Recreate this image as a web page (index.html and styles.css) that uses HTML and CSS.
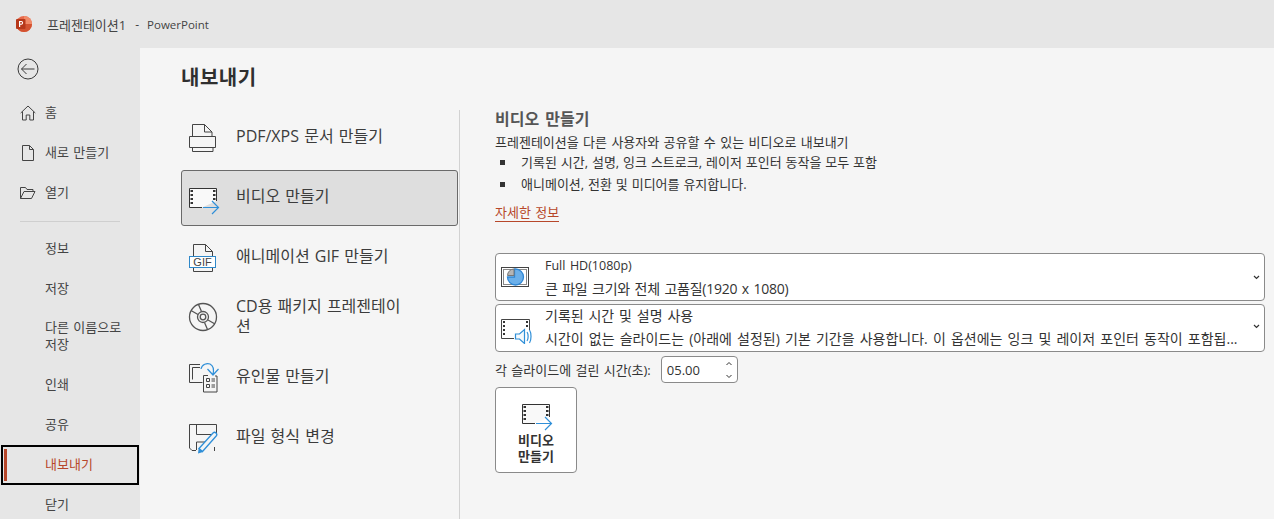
FILE: index.html
```html
<!DOCTYPE html>
<html lang="ko">
<head>
<meta charset="utf-8">
<title>내보내기</title>
<link rel="stylesheet" href="styles.css">
</head>
<body>
<div class="app">
  <header class="titlebar">
    <svg class="logo" width="16" height="16" viewBox="0 0 16 16"><circle cx="8" cy="8" r="8" fill="#e8694a"/><path d="M8 0a8 8 0 0 1 8 8H8z" fill="#f08a68"/><path d="M0 8a8 8 0 0 0 16 0z" fill="#d35230"/><rect x="0" y="3" width="9.500" height="10" rx="1" fill="#b7381a"/><path d="M3 5h2.300a1.800 1.800 0 0 1 0 3.700H4.200V11H3zM4.200 6v1.700h1a.85.85 0 0 0 0-1.700z" fill="#fff"/></svg>
    <span class="doc-name">프레젠테이션1</span>
    <span class="sep">-</span>
    <span class="app-name">PowerPoint</span>
  </header>
  <div class="main">
    <nav class="sidebar">
      <div class="back">
        <svg width="22" height="22" viewBox="0 0 22 22" fill="none" stroke="#3a3a3a"><circle cx="11" cy="11" r="10"/><path d="M4.500 11h13M9.500 6l-5 5 5 5"/></svg>
      </div>
      <a class="nav-item with-icon"><svg width="16" height="16" viewBox="0 0 16 16" fill="none" stroke="#444"><path d="M.7 8 8 1l7.300 7M2.500 6.500v8.500h3.700v-5h3.600v5h3.700V6.500"/></svg><span>홈</span></a>
      <a class="nav-item with-icon"><svg width="16" height="16" viewBox="0 0 16 16" fill="none" stroke="#444"><path d="M2.500.5h7l4 4v11h-11zM9.500.5v4h4"/></svg><span>새로 만들기</span></a>
      <a class="nav-item with-icon"><svg width="16" height="16" viewBox="0 0 16 16" fill="none" stroke="#444"><path d="M.5 13.500v-11h5l1.500 2h6v2M.5 13.500h11l3.500-7H4z"/></svg><span>열기</span></a>
      <div class="nav-divider"></div>
      <a class="nav-item">정보</a>
      <a class="nav-item">저장</a>
      <a class="nav-item tall">다른 이름으로 저장</a>
      <a class="nav-item">인쇄</a>
      <a class="nav-item">공유</a>
      <a class="nav-item active">내보내기</a>
      <a class="nav-item">닫기</a>
    </nav>
    <main class="content">
      <h1 class="page-title">내보내기</h1>
      <div class="columns">
        <ul class="export-list">
          <li class="export-item">
            <svg class="big-icon" width="32" height="32" viewBox="0 0 32 32" fill="none" stroke="#444"><path d="M5.500 14V2.500h12l7.500 7.500v4M17.500 2.500v7.500H25M2.500 14.500h26v11h-26zM5.500 25.500v4h20.500v-4"/></svg>
            <span>PDF/XPS 문서 만들기</span>
          </li>
          <li class="export-item selected">
            <svg class="big-icon film" width="32" height="32" viewBox="0 0 32 32" fill="none"><use href="#film"/></svg>
            <span>비디오 만들기</span>
          </li>
          <li class="export-item">
            <svg class="big-icon" width="32" height="32" viewBox="0 0 32 32" fill="none" stroke="#444"><path d="M6.500 14V2.500h12l7 7V14M18.500 2.500v7h7M6.500 25.500v4h19v-4"/><rect x="2.500" y="14.500" width="26" height="11" stroke="#2f88c9" fill="#fff"/><text x="15.500" y="24" class="gif">GIF</text></svg>
            <span>애니메이션 GIF 만들기</span>
          </li>
          <li class="export-item">
            <svg class="big-icon" width="32" height="32" viewBox="0 0 32 32" fill="none" stroke="#555" stroke-width="1.300"><circle cx="16" cy="15" r="13.500"/><circle cx="16" cy="15" r="5.500"/><circle cx="16" cy="15" r="2.800"/><path d="M4 8.500l7 4M21 18l7 4M11.500 2.500l3 7M17.500 20.500l3 7"/></svg>
            <span class="wrap">CD용 패키지 프레젠테이션</span>
          </li>
          <li class="export-item">
            <svg class="big-icon" width="32" height="32" viewBox="0 0 32 32" fill="none" stroke="#444"><path d="M13 2.500H2.500v18H15.500M5.500 17.500v-12H13M16.500 13.500v16.500h13.500v-16h-2M16.500 13.500H21M19.500 16.500h3v3h-3zM19.500 22.500h3v3h-3zM24.500 17h3.500M24.500 19h3.500M24.500 23h3.500M24.500 25h3.500"/><path d="M14 7c1-5 6-6 9-5 3 1.500 4 6 3 10.500M20.500 7l5.500 6 5.500-6" stroke="#2f8fd8" stroke-width="1.200"/></svg>
            <span>유인물 만들기</span>
          </li>
          <li class="export-item">
            <svg class="big-icon" width="32" height="32" viewBox="0 0 32 32" fill="none" stroke="#444"><path d="M9 28.500H5l-2.500-2.500V2.500h27v11M9.500 2.500v10h17M9.500 28v-8h9"/><path d="M27.500 29V25" /><path d="M12 26.500 26 11c2-2 5 .8 3.200 3L15.500 29.500z" stroke="#2f8fd8" stroke-width="1.300" fill="#f5f5f5"/><path d="M11 31.500l.7-5.500 4.300 4z" fill="#2f8fd8" stroke="none"/></svg>
            <span>파일 형식 변경</span>
          </li>
        </ul>
        <section class="detail">
          <h2 class="detail-title">비디오 만들기</h2>
          <p class="detail-sub">프레젠테이션을 다른 사용자와 공유할 수 있는 비디오로 내보내기</p>
          <ul class="bullets">
            <li>기록된 시간, 설명, 잉크 스트로크, 레이저 포인터 동작을 모두 포함</li>
            <li>애니메이션, 전환 및 미디어를 유지합니다.</li>
          </ul>
          <a class="more">자세한 정보</a>
          <div class="select">
            <svg width="32" height="32" viewBox="0 0 32 32" fill="none" stroke="#444"><rect x="1.500" y="6.500" width="27" height="19"/><rect x="3.500" y="8.500" width="23" height="15" stroke="#888"/><path d="M15.500 8a8 8 0 1 1-8 8h7v-8z" fill="#6cb0ea" stroke="#2e86d4" stroke-width="1.300"/><path d="M14 8v6.500H7.500A6.500 6.500 0 0 1 14 8z" fill="#b5b5b5" stroke="#777"/></svg>
            <div class="select-text">
              <div class="select-line latin">Full HD(1080p)</div>
              <div class="select-line tight">큰 파일 크기와 전체 고품질(1920 x 1080)</div>
            </div>
            <svg class="chev" width="7" height="5" viewBox="0 0 7 5" fill="none" stroke="#333" stroke-width="1.200"><path d="M1 1 3.500 3.500 6 1"/></svg>
          </div>
          <div class="select">
            <svg width="32" height="32" viewBox="0 0 32 32" fill="none"><path d="M14 26.500H1.500v-19h28V18" stroke="#444"/><path d="M3 10h2M3 14h2M3 18h2M3 22h2M26 10h2M26 14h2" stroke="#333" stroke-width="2"/><path d="M15.500 22h4l5-4.500v14l-5-4.500h-4z" fill="#f5fafd" stroke="#2f8fd8" stroke-width="1.200"/><path d="M27 20c1.500 2 1.500 7 0 9M29.500 18c2 3 2 10 0 13" stroke="#2f8fd8" stroke-width="1.200"/></svg>
            <div class="select-text raised">
              <div class="select-line">기록된 시간 및 설명 사용</div>
              <div class="select-line wide">시간이 없는 슬라이드는 (아래에 설정된) 기본 기간을 사용합니다. 이 옵션에는 잉크 및 레이저 포인터 동작이 포함됩...</div>
            </div>
            <svg class="chev raised" width="7" height="5" viewBox="0 0 7 5" fill="none" stroke="#333" stroke-width="1.200"><path d="M1 1 3.500 3.500 6 1"/></svg>
          </div>
          <div class="timing">
            <label>각 슬라이드에 걸린 시간(초):</label>
            <div class="spin">
              <span class="spin-value">05.00</span>
              <svg width="8" height="20" viewBox="0 0 8 20" fill="none" stroke="#333"><path d="M1.500 5l2.500-2.500L6.500 5M1.500 15l2.500 2.500L6.500 15"/></svg>
            </div>
          </div>
          <button class="make-btn">
            <svg class="film" width="32" height="32" viewBox="0 0 32 32" fill="none"><use href="#film"/></svg>
            <span>비디오<br>만들기</span>
          </button>
        </section>
      </div>
    </main>
  </div>
</div>
<svg class="defs" width="0" height="0"><defs><g id="film"><path d="M15 25.500H2.500v-19h27V19" stroke="#333" fill="#f9f9f9"/><path d="M3.500 9h2.500M3.500 13h2.500M3.500 17h2.500M3.500 21h2.500M26 9h2.500M26 13h2.500M26 17h2.500" stroke="#333" stroke-width="2"/><path d="M16 25.500h15.500M25 19l6.500 6.500L25 32" stroke="#2f8fd8" stroke-width="1.200"/></g></defs></svg>
</body>
</html>
```

FILE: styles.css
```css
* { box-sizing: border-box; }
html, body { margin: 0; height: 100%; overflow: hidden; }
body {
  font-family: "Open Sans", "Noto Sans CJK KR", sans-serif;
  font-size: 13px;
  word-spacing: 1px;
  color: #333;
  background: #e6e6e6;
}
a { display: block; }
ul { list-style: none; margin: 0; padding: 0; }
.defs { position: absolute; }
.film { overflow: visible; }

.app { display: flex; flex-direction: column; height: 519px; overflow: hidden; }
.titlebar {
  height: 48px;
  flex: none;
  display: flex;
  align-items: center;
  padding: 0 0 0 16px;
  color: #444;
}
.doc-name { margin-left: 15px; }
.sep { margin: 0 8px 0 9px; font-size: 12px; }
.app-name { font-size: 11.5px; }

.main { flex: 1; display: flex; min-height: 0; }
.sidebar { width: 140px; flex: none; padding-left: 1px; }
.back { height: 42px; padding: 10px 0 0 16px; }
.nav-item {
  height: 40px;
  display: flex;
  align-items: center;
  padding-left: 44px;
  padding-bottom: 2px;
  color: #444;
  line-height: 17px;
  width: 138px;
  word-break: keep-all;
}
.with-icon { padding-left: 19px; padding-bottom: 0; gap: 9px; }
.with-icon span { margin-bottom: 2px; }
.with-icon:first-of-type { margin-top: 3px; }
.nav-divider { height: 1px; background: #cfcfcf; margin: 8px 20px 7px 19px; width: 100px; }
.nav-item.tall { height: 56px; padding-right: 10px; }
.nav-item.active {
  color: #b7472a;
  border: 2px solid #000;
  position: relative;
  padding-left: 42px;
}
.nav-item.active::before {
  content: "";
  position: absolute;
  left: 1px;
  top: 2px;
  bottom: 2px;
  width: 3px;
  background: #b7472a;
}

.content { flex: 1; background: #f5f5f5; padding: 0 9px 0 41px; min-width: 0; }
.page-title { margin: 0; height: 62px; font-size: 20px; font-weight: 700; letter-spacing: .5px; line-height: 60px; color: #2f2f2f; }
.columns { display: flex; height: 409px; }
.export-list { width: 279px; flex: none; display: flex; flex-direction: column; gap: 4px; border-right: 1px solid #d2d2d2; }
.export-item {
  width: 277px;
  height: 56px;
  display: flex;
  align-items: center;
  gap: 17px;
  padding-left: 5px;
  font-size: 16px;
  line-height: 20px;
  color: #3c3c3c;
  border: 1px solid transparent;
  border-radius: 3px;
}
.export-item span { margin-bottom: 4px; }
.export-item.selected { background: #dedede; border-color: #6a6a6a; }
.big-icon { flex: none; }
.wrap { width: 175px; }
.gif { font-family: "Liberation Sans", sans-serif; font-size: 11px; fill: #444; stroke: none; text-anchor: middle; }

.detail { flex: 1; padding-left: 35px; min-width: 0; }
.detail-title { margin: 0; font-size: 16px; font-weight: 700; word-spacing: 2px; line-height: 18px; color: #555; }
.detail-sub { margin: 5px 0 0; line-height: 18px; }
.bullets { margin-top: 0; word-spacing: .5px; }
.bullets li { position: relative; padding-left: 26px; line-height: 22px; height: 22px; }
.bullets li::before {
  content: "";
  position: absolute;
  left: 5px;
  top: 9px;
  width: 5px;
  height: 5px;
  background: #333;
}
.more { margin-top: 9px; width: max-content; color: #b7472a; line-height: 17px; border-bottom: 1px solid #b7472a; }
.select {
  height: 48px;
  margin-bottom: 3px;
  border: 1px solid #8a8a8a;
  border-radius: 4px;
  background: #fff;
  display: flex;
  align-items: center;
  padding: 0 4px 0 4px;
  gap: 13px;
  font-size: 14px;
  word-spacing: 1.2px;
}
.more + .select { margin-top: 31px; }
.select > svg:first-child { flex: none; }
.select-text { flex: 1; min-width: 0; }
.select-text.raised { margin-bottom: 3px; }
.select-line { line-height: 23px; white-space: nowrap; overflow: hidden; }
.select-line.latin { font-size: 12.5px; }
.select-line.tight { letter-spacing: -.25px; }
.select-line.wide { word-spacing: 1.5px; }
.chev { flex: none; }
.chev.raised { margin-bottom: 3px; }
.timing { display: flex; align-items: center; gap: 10px; height: 27px; margin-top: 4px; }
.spin {
  width: 77px;
  height: 27px;
  border: 1px solid #8a8a8a;
  border-radius: 4px;
  background: #fff;
  display: flex;
  align-items: center;
  justify-content: space-between;
  padding: 0 4px 0 5px;
}
.make-btn {
  display: flex;
  flex-direction: column;
  align-items: center;
  width: 82px;
  height: 86px;
  margin-top: 4px;
  padding: 10px 0 0;
  border: 1px solid #8a8a8a;
  border-radius: 4px;
  background: #fff;
  font: inherit;
  font-weight: 700;
  line-height: 16px;
  color: #333;
}
.make-btn span { margin-top: 2px; }
```
